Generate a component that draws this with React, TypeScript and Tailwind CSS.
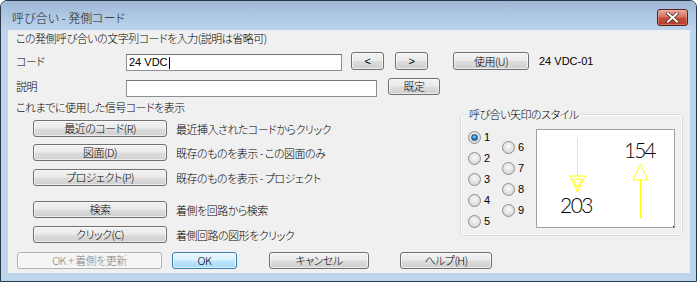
import React from 'react';

const ui = "font-['Noto_Sans_CJK_JP',sans-serif] [font-feature-settings:'palt'] text-[11px] tracking-[-0.5px] font-light text-black";

type BtnProps = {
  label: string;
  className?: string;
  variant?: 'normal' | 'default' | 'disabled';
};

const Btn: React.FC<BtnProps> = ({ label, className = '', variant = 'normal' }) => {
  let skin =
    'border-[#707070] bg-[linear-gradient(to_bottom,#f2f2f2_0%,#ebebeb_48%,#dddddd_52%,#cfcfcf_100%)] text-black';
  if (variant === 'default')
    skin =
      'border-[#3c7fb1] bg-[linear-gradient(to_bottom,#eaf6fd_0%,#d9f0fc_48%,#bee6fd_52%,#a7d9f5_100%)] text-black';
  if (variant === 'disabled') skin = 'border-[#adb2b5] bg-[#f4f4f4] text-[#838383]';
  return (
    <div
      className={`shrink-0 flex items-center justify-center rounded-[3px] border shadow-[inset_0_0_0_1px_#ffffff99] leading-none ${skin} ${className}`}
    >
      {label}
    </div>
  );
};

const Radio: React.FC<{ n: number; checked?: boolean }> = ({ n, checked }) => (
  <div className="h-[21px] flex items-center">
    <div className="w-[13px] h-[13px] rounded-full border border-[#8e8f8f] bg-[radial-gradient(circle_at_50%_40%,#fafafa_0%,#e6e6e6_45%,#c8c8c8_100%)] flex items-center justify-center">
      {checked && (
        <div className="w-[7px] h-[7px] rounded-full bg-[radial-gradient(circle_at_45%_35%,#8fd3ff_0%,#2a8ad4_45%,#0b3f74_100%)] border border-[#1b4f80]" />
      )}
    </div>
    <span className="ml-[3px] text-[11px] tracking-normal font-normal font-['Liberation_Sans',sans-serif]">{n}</span>
  </div>
);

const Preview: React.FC = () => (
  <div className="w-[139px] h-[99px] bg-white border border-[#a0a0a0] shrink-0">
    <svg width="137" height="97" viewBox="1 1 137 97">
      <line x1="41.5" y1="9" x2="41.5" y2="47" stroke="#ffff00" strokeWidth="1" />
      <polygon points="34,47 49,47 41.5,63" fill="none" stroke="#ffff00" strokeWidth="1" />
      <polygon points="37,50 46,50 41.5,59" fill="none" stroke="#ffff00" strokeWidth="1" />
      <text x="24" y="84" fontSize="21" fontFamily="Lato" fontWeight="300" textLength="33" fill="#000">
        203
      </text>
      <text x="88" y="29" fontSize="21" fontFamily="Lato" fontWeight="300" textLength="32" fill="#000">
        154
      </text>
      <polygon points="104.5,35 112,51 97,51" fill="none" stroke="#ffff00" strokeWidth="1" />
      <line x1="104.5" y1="51" x2="104.5" y2="89" stroke="#ffff00" strokeWidth="1" />
      <rect x="137" y="97" width="1" height="1" fill="#000" />
    </svg>
  </div>
);

const HistoryRow: React.FC<{ label: string; desc: string; className?: string }> = ({ label, desc, className = '' }) => (
  <div className={`flex items-center ${className}`}>
    <Btn label={label} className="w-[134px] h-[17px]" />
    <span className="ml-[9px] leading-[16px]">{desc}</span>
  </div>
);

export default function App() {
  return (
    <div className={`w-[697px] h-[282px] bg-[#bcd4ec] border border-[#2a3a4a] rounded-t-[7px] flex flex-col overflow-hidden ${ui}`}>
      {/* Title bar */}
      <div className="h-[29px] pt-[4px] pl-[11px] pr-[8px] flex items-center justify-between bg-[linear-gradient(to_bottom,#9db7d6_0%,#aec7e3_50%,#bcd4ec_100%)]">
        <span className="text-[12px] tracking-normal text-[#1a1a1a]">呼び合い - 発側コード</span>
        <div className="w-[31px] h-[17px] rounded-[3px] border border-[#5b1e1a] bg-[linear-gradient(to_bottom,#e9a99b_0%,#d67463_45%,#c44c3c_55%,#b83a2a_100%)] flex items-center justify-center shadow-[inset_0_0_0_1px_#f3c0b066]">
          <svg width="13" height="11" viewBox="0 0 13 11">
            <path d="M2 1.5 L11 9.5 M11 1.5 L2 9.5" stroke="#5a2a25" strokeWidth="3.6" strokeLinecap="square" />
            <path d="M2 1.5 L11 9.5 M11 1.5 L2 9.5" stroke="#ffffff" strokeWidth="2" strokeLinecap="square" />
          </svg>
        </div>
      </div>

      {/* Client */}
      <div className="flex-1 ml-[7px] mr-[6px] mb-[8px] bg-[#f0f0f0] pl-[8px] pr-[7px] flex flex-col">
        <div className="h-[16px] leading-[16px]">この発側呼び合いの文字列コードを入力(説明は省略可)</div>

        <div className="mt-[6px] flex items-start">
          <span className="w-[110px] leading-[18px]">コード</span>
          <div className="mt-[2px] w-[216px] h-[17px] bg-white border border-[#8a8f96] border-t-[#6f747b] flex items-center pl-[2px] tracking-normal font-normal font-['Liberation_Sans','Noto_Sans_CJK_JP',sans-serif]">
            24 VDC<span className="w-px h-[12px] bg-black ml-[1px]" />
          </div>
          <Btn label="<" className="ml-[9px] w-[33px] h-[18px] font-normal font-['Liberation_Sans',sans-serif]" />
          <Btn label=">" className="ml-[11px] w-[33px] h-[18px] font-normal font-['Liberation_Sans',sans-serif]" />
          <Btn label="使用(U)" className="ml-[25px] w-[76px] h-[18px]" />
          <span className="ml-[10px] leading-[18px] tracking-normal font-normal font-['Liberation_Sans',sans-serif]">24 VDC-01</span>
        </div>

        <div className="mt-[7px] flex items-start">
          <span className="w-[110px] leading-[16px]">説明</span>
          <div className="mt-[2px] w-[251px] h-[17px] bg-white border border-[#8a8f96] border-t-[#6f747b]" />
          <Btn label="既定" className="ml-[11px] w-[52px] h-[17px]" />
        </div>

        <div className="mt-[2px] h-[16px] leading-[16px]">これまでに使用した信号コードを表示</div>

        <div className="flex items-start">
          <div className="flex-1 pl-[17px] pt-[5px] flex flex-col">
            <HistoryRow label="最近のコード(R)" desc="最近挿入されたコードからクリック" />
            <HistoryRow label="図面(D)" desc="既存のものを表示 - この図面のみ" className="mt-[7px]" />
            <HistoryRow label="プロジェクト(P)" desc="既存のものを表示 - プロジェクト" className="mt-[8px]" />
            <HistoryRow label="検索" desc="着側を回路から検索" className="mt-[15px]" />
            <HistoryRow label="クリック(C)" desc="着側回路の図形をクリック" className="mt-[8px]" />
          </div>

          <div className="relative -mt-[1px] w-[223px] h-[122px] rounded-[3px] border border-[#d5dfe5] shadow-[inset_0_0_0_1px_#ffffff] flex">
            <span className="absolute -top-[9px] left-[6px] px-[2px] bg-[#f0f0f0] leading-[16px]">呼び合い矢印のスタイル</span>
            <div className="w-[34px] ml-[7px] mt-[12px] flex flex-col">
              <Radio n={1} checked />
              <Radio n={2} />
              <Radio n={3} />
              <Radio n={4} />
              <Radio n={5} />
            </div>
            <div className="w-[34px] mt-[22px] flex flex-col">
              <Radio n={6} />
              <Radio n={7} />
              <Radio n={8} />
              <Radio n={9} />
            </div>
            <div className="mt-[14px]">
              <Preview />
            </div>
          </div>
        </div>

        <div className="mt-[9px] flex items-center">
          <Btn label="OK + 着側を更新" variant="disabled" className="ml-[1px] w-[145px] h-[17px]" />
          <Btn label="OK" variant="default" className="ml-[10px] w-[65px] h-[17px]" />
          <Btn label="キャンセル" className="ml-[32px] w-[100px] h-[17px]" />
          <Btn label="ヘルプ(H)" className="ml-[31px] w-[92px] h-[17px] -mt-[1px]" />
        </div>
      </div>
    </div>
  );
}
